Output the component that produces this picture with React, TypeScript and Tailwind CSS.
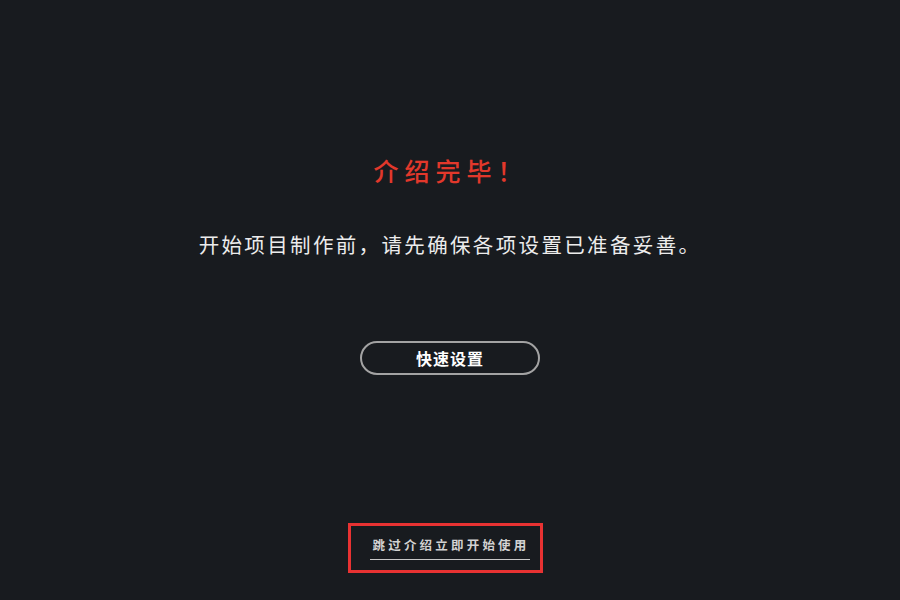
import React from 'react';

export default function App() {
  return (
    <div
      className="w-[900px] h-[600px] bg-[#181b1f] flex flex-col items-center overflow-hidden"
      style={{ fontFamily: '"Noto Sans CJK SC", "Noto Sans", sans-serif' }}
    >
      {/* Heading */}
      <h1 className="mt-[152px] mr-[4px] text-[25px] leading-[36px] tracking-[6px] text-[#e2382b] font-medium pl-[6px]">
        介绍完毕！
      </h1>
      <p className="mt-[42px] text-[20.5px] leading-[28px] tracking-[2.35px] text-[#ececec]">
        开始项目制作前，请先确保各项设置已准备妥善。
      </p>

      {/* Quick setup */}
      <button className="mt-[83px] w-[180px] h-[34px] rounded-full border-2 border-[#a3a3a3] text-white text-[16px] font-bold tracking-[1px] flex items-center justify-center">
        快速设置
      </button>

      {/* Skip link */}
      <div className="mt-[148px] mr-[10px] w-[195px] h-[50px] border-[3px] border-[#e83232] flex items-center justify-center">
        <span className="ml-[10px] text-[12.5px] font-bold tracking-[3.2px] text-[#d2d2d2] border-b border-[#c8c8c8] pb-[5px] mt-[0px] pl-[2px]">
          跳过介绍立即开始使用
        </span>
      </div>
    </div>
  );
}
